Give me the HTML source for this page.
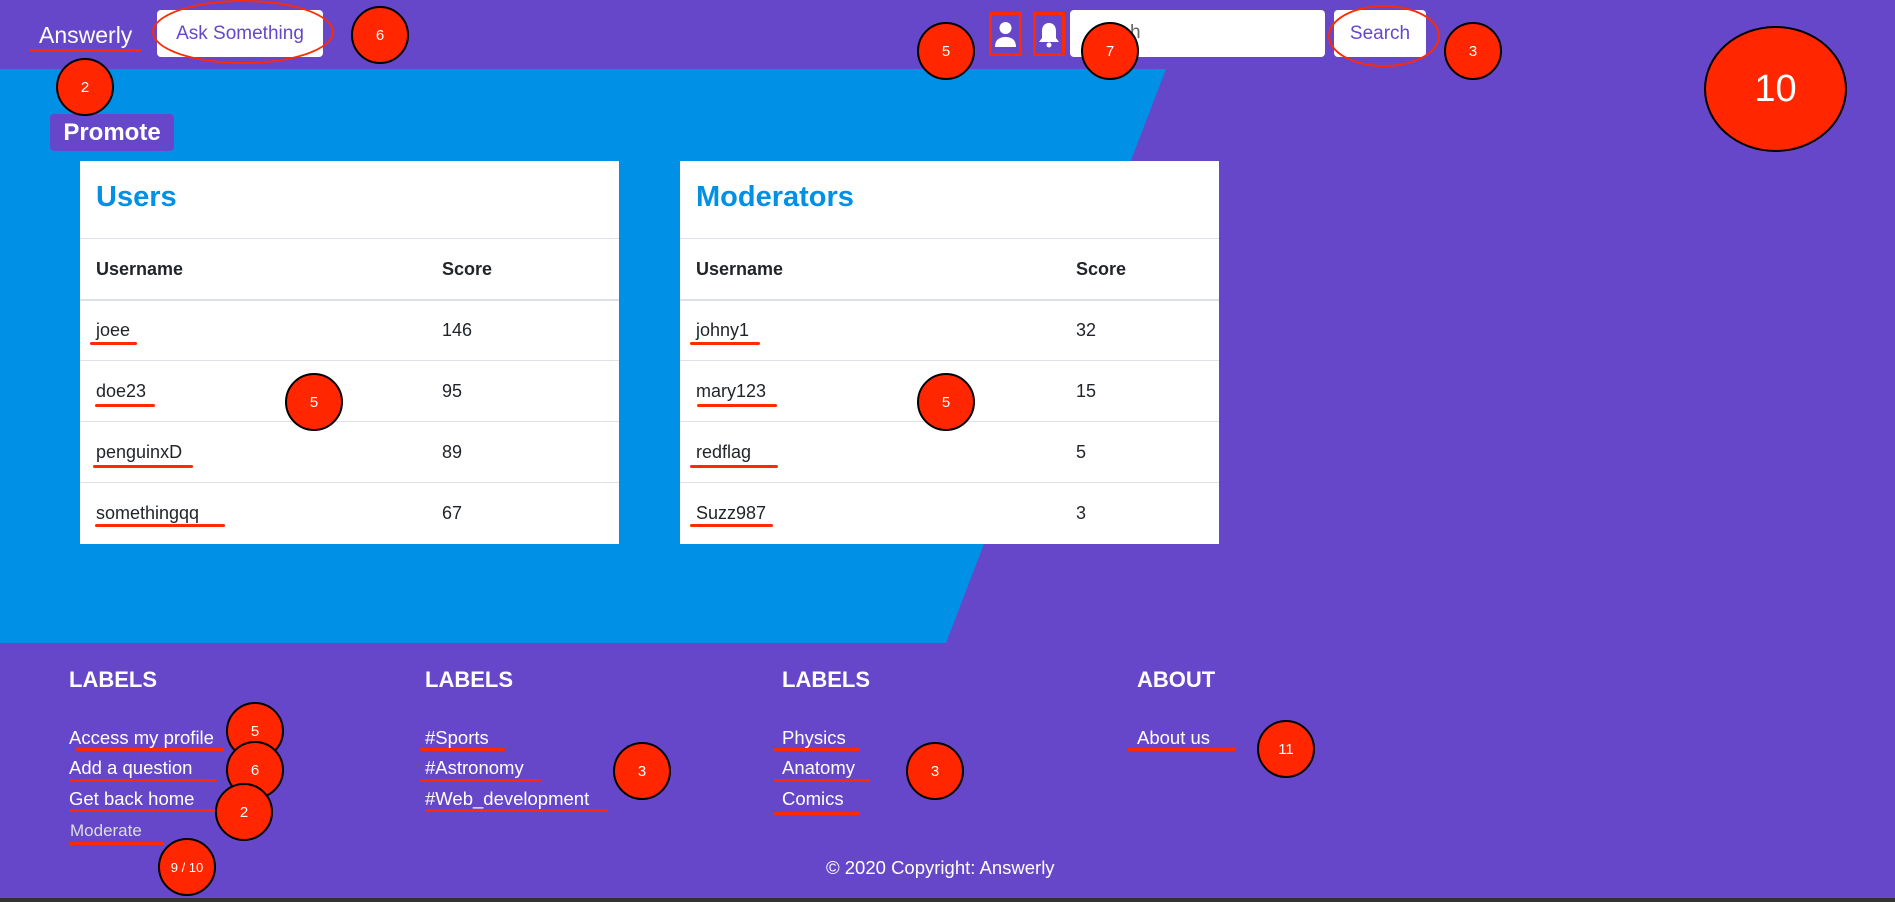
<!DOCTYPE html>
<html><head><meta charset="utf-8"><style>
*{margin:0;padding:0;box-sizing:border-box}
body{width:1895px;height:902px;background:#6747C9;font-family:"Liberation Sans",sans-serif;position:relative;overflow:hidden;color:#fff}
.a{position:absolute}
.blue{position:absolute;left:0;top:69px;width:1166px;height:574px;background:#0091E6;clip-path:polygon(0 0,1166px 0,946px 574px,0 574px)}
.btn{position:absolute;background:#fff;border-radius:4px;color:#6747C9;font-size:19px;display:flex;align-items:center;justify-content:center}
.card{position:absolute;background:#fff;top:161px;width:539px;height:383px;color:#212529}
.card h2{position:absolute;left:16px;top:20px;font-size:29px;color:#0091E6;font-weight:bold}
.card .hl{position:absolute;left:0;right:0;height:1px;background:#dee2e6}
.card .t{position:absolute;font-size:18px}
.card .b{font-weight:bold}
.ul{position:absolute;height:3px;background:#ff2a00;border-radius:2px}
.c{position:absolute;width:58px;height:58px;border-radius:50%;background:#ff2600;border:2.5px solid #000;color:#fff;font-size:15px;display:flex;align-items:center;justify-content:center}
.f h3{position:absolute;font-size:22px;font-weight:bold}
.f .l{position:absolute;font-size:18.5px}
</style></head><body>
<div class="blue"></div>
<div class="a" style="left:39px;top:22px;font-size:23px">Answerly</div>
<div class="ul" style="left:30px;top:49px;width:112px"></div>
<div class="btn" style="left:157px;top:10px;width:166px;height:47px">Ask Something</div>
<div class="a" style="left:152px;top:0px;width:182px;height:64px;border:2px solid #ff2a00;border-radius:50%"></div>
<div class="a" style="left:989px;top:12px;width:33px;height:44px;border:3px solid #ff2a00"><svg width="27" height="38" viewBox="0 0 27 38"><circle cx="13.5" cy="13" r="6" fill="#fff"/><path d="M3 32c0-7 4-10 10.5-10S24 25 24 32z" fill="#fff"/></svg></div>
<div class="a" style="left:1033px;top:12px;width:32px;height:44px;border:3px solid #ff2a00"><svg width="26" height="38" viewBox="0 0 26 38"><path d="M13 8c-5 0-7 4-7 8v7l-3 4h20l-3-4v-7c0-4-2-8-7-8z" fill="#fff"/><circle cx="13" cy="30" r="2.5" fill="#fff"/></svg></div>
<div class="a" style="left:1070px;top:10px;width:255px;height:47px;background:#fff;border-radius:4px;color:#666;font-size:19px;padding:12px 0 0 60px">h</div>
<div class="btn" style="left:1334px;top:10px;width:92px;height:47px">Search</div>
<div class="a" style="left:1328px;top:5px;width:112px;height:62px;border:2px solid #ff2a00;border-radius:50%"></div>
<div class="a" style="left:50px;top:114px;width:124px;height:37px;background:#6747C9;border-radius:4px;font-size:24px;font-weight:bold;display:flex;align-items:center;justify-content:center">Promote</div>

<div class="card" style="left:80px">
<h2>Users</h2>
<div class="hl" style="top:77px"></div>
<div class="t b" style="left:16px;top:98px">Username</div><div class="t b" style="left:362px;top:98px">Score</div>
<div class="hl" style="top:138px;height:2px"></div>
<div class="t" style="left:16px;top:159px">joee</div><div class="t" style="left:362px;top:159px">146</div>
<div class="hl" style="top:199px"></div>
<div class="t" style="left:16px;top:220px">doe23</div><div class="t" style="left:362px;top:220px">95</div>
<div class="hl" style="top:260px"></div>
<div class="t" style="left:16px;top:281px">penguinxD</div><div class="t" style="left:362px;top:281px">89</div>
<div class="hl" style="top:321px"></div>
<div class="t" style="left:16px;top:342px">somethingqq</div><div class="t" style="left:362px;top:342px">67</div>
</div>
<div class="card" style="left:680px">
<h2>Moderators</h2>
<div class="hl" style="top:77px"></div>
<div class="t b" style="left:16px;top:98px">Username</div><div class="t b" style="left:396px;top:98px">Score</div>
<div class="hl" style="top:138px;height:2px"></div>
<div class="t" style="left:16px;top:159px">johny1</div><div class="t" style="left:396px;top:159px">32</div>
<div class="hl" style="top:199px"></div>
<div class="t" style="left:16px;top:220px">mary123</div><div class="t" style="left:396px;top:220px">15</div>
<div class="hl" style="top:260px"></div>
<div class="t" style="left:16px;top:281px">redflag</div><div class="t" style="left:396px;top:281px">5</div>
<div class="hl" style="top:321px"></div>
<div class="t" style="left:16px;top:342px">Suzz987</div><div class="t" style="left:396px;top:342px">3</div>
</div>
<div class="ul" style="left:90px;top:342px;width:47px"></div>
<div class="ul" style="left:95px;top:404px;width:60px"></div>
<div class="ul" style="left:93px;top:465px;width:100px"></div>
<div class="ul" style="left:95px;top:524px;width:130px"></div>
<div class="ul" style="left:690px;top:342px;width:70px"></div>
<div class="ul" style="left:697px;top:404px;width:80px"></div>
<div class="ul" style="left:690px;top:465px;width:88px"></div>
<div class="ul" style="left:690px;top:524px;width:83px"></div>

<div class="f">
<h3 style="left:69px;top:667px">LABELS</h3>
<h3 style="left:425px;top:667px">LABELS</h3>
<h3 style="left:782px;top:667px">LABELS</h3>
<h3 style="left:1137px;top:667px">ABOUT</h3>
<div class="l" style="left:69px;top:727px">Access my profile</div>
<div class="l" style="left:69px;top:757px">Add a question</div>
<div class="l" style="left:69px;top:788px">Get back home</div>
<div class="l" style="left:70px;top:821px;font-size:17px;color:#ddd">Moderate</div>
<div class="l" style="left:425px;top:727px">#Sports</div>
<div class="l" style="left:425px;top:757px">#Astronomy</div>
<div class="l" style="left:425px;top:788px">#Web_development</div>
<div class="l" style="left:782px;top:727px">Physics</div>
<div class="l" style="left:782px;top:757px">Anatomy</div>
<div class="l" style="left:782px;top:788px">Comics</div>
<div class="l" style="left:1137px;top:727px">About us</div>
<div class="l" style="left:826px;top:857px">© 2020 Copyright: Answerly</div>
</div>
<div class="ul" style="left:76px;top:748px;width:148px"></div>
<div class="ul" style="left:69px;top:779px;width:148px"></div>
<div class="ul" style="left:69px;top:809px;width:146px"></div>
<div class="ul" style="left:69px;top:842px;width:95px"></div>
<div class="ul" style="left:420px;top:748px;width:85px"></div>
<div class="ul" style="left:420px;top:779px;width:121px"></div>
<div class="ul" style="left:425px;top:809px;width:183px"></div>
<div class="ul" style="left:774px;top:748px;width:86px"></div>
<div class="ul" style="left:774px;top:779px;width:96px"></div>
<div class="ul" style="left:774px;top:812px;width:86px"></div>
<div class="ul" style="left:1127px;top:748px;width:109px"></div>
<div class="a" style="left:0;top:898px;width:1895px;height:4px;background:#333"></div>

<div class="c" style="left:351px;top:6px">6</div>
<div class="c" style="left:56px;top:58px">2</div>
<div class="c" style="left:917px;top:22px">5</div>
<div class="c" style="left:1081px;top:22px">7</div>
<div class="c" style="left:1444px;top:22px">3</div>
<div class="c" style="left:1704px;top:26px;width:143px;height:126px;font-size:38px">10</div>
<div class="c" style="left:285px;top:373px">5</div>
<div class="c" style="left:917px;top:373px">5</div>
<div class="c" style="left:226px;top:702px">5</div>
<div class="c" style="left:226px;top:741px">6</div>
<div class="c" style="left:215px;top:783px">2</div>
<div class="c" style="left:158px;top:838px;font-size:13px">9 / 10</div>
<div class="c" style="left:613px;top:742px">3</div>
<div class="c" style="left:906px;top:742px">3</div>
<div class="c" style="left:1257px;top:720px">11</div>
</body></html>
